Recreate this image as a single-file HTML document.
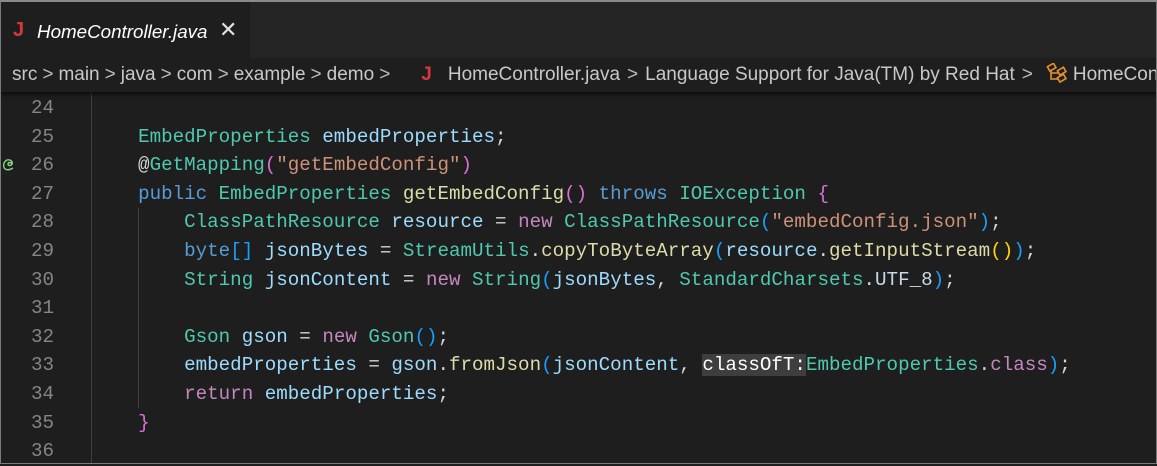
<!DOCTYPE html>
<html><head><meta charset="utf-8"><style>
*{margin:0;padding:0;box-sizing:border-box}
body{width:1157px;height:464px;background:#1e1e1e;overflow:hidden;position:relative;font-family:"Liberation Sans",sans-serif}
.frame{position:absolute;inset:0;border:1px solid #7a7a7a;border-top:2px solid #8a8a8a;pointer-events:none;z-index:5}
.tabbar{position:absolute;left:0;top:0;width:1157px;height:58px;background:#252526}
.tab{position:absolute;left:1px;top:2px;width:249px;height:56px;background:#1e1e1e;color:#fff}
.tab .j{position:absolute;left:12px;top:17px;color:#d9363e;font-weight:bold;font-size:20px}
.tab .name{position:absolute;left:36px;top:19px;font-style:italic;font-size:18.8px}
.tab .x{position:absolute;left:218px;top:15px;font-size:22px;color:#e0e0e0}
.crumb{position:absolute;left:0;top:58px;width:1157px;height:34px;background:#1e1e1e;box-shadow:0 3px 4px rgba(0,0,0,.55);color:#c8c8c8;font-size:19px;white-space:nowrap;line-height:34px;padding-left:12px;z-index:2;overflow:hidden}
.crumb .s{color:#bbb;margin:0 5px}
.crumb .s2b{color:#bbb;margin:0 7px}
.crumb .jj{color:#d9363e;font-weight:bold;margin:0 16px 0 26px}
.code{position:absolute;left:0;top:94px;font-family:"Liberation Mono",monospace;font-size:19.2px;color:#d4d4d4;white-space:pre}
.ln{position:absolute;left:0;width:54px;text-align:right;color:#858585}
.l{position:absolute;left:92px;height:29px;line-height:29px}
.row{position:absolute;left:0;width:1157px;height:29px;line-height:29px}
.guide{position:absolute;width:1px;background:#404040}
.t{color:#4ec9b0}.k{color:#569cd6}.p{color:#c586c0}.v{color:#9cdcfe}.f{color:#dcdcaa}.s2{color:#ce9178}
.m{color:#da70d6}.b{color:#179fff}.g{color:#ffd700}
.hl{background:#3e3e3e;color:#fff}
</style></head><body>
<div class="tabbar"><div class="tab"><span class="j">J</span><span class="name">HomeController.java</span><span class="x">✕</span></div></div>
<div class="crumb">src<span class="s">&gt;</span>main<span class="s">&gt;</span>java<span class="s">&gt;</span>com<span class="s">&gt;</span>example<span class="s">&gt;</span>demo<span class="s">&gt;</span><span class="jj">J</span>HomeController.java<span class="s2b">&gt;</span>Language Support for Java(TM) by Red Hat<span class="s2b">&gt;</span><svg width="22" height="20" viewBox="0 0 22 20" style="vertical-align:-3px;margin:0 5px 0 6px"><g fill="none" stroke="#e8912d" stroke-width="1.6"><rect x="2" y="2" width="7" height="5" transform="rotate(-30 5 4)"/><rect x="12" y="6" width="7" height="5" transform="rotate(-30 15 8)"/><rect x="12" y="13" width="7" height="5" transform="rotate(-30 15 15)"/><path d="M5 7v9h7M5 10h7"/></g></svg>HomeController</div>
<div class="guide" style="left:91px;top:93px;height:371px"></div>
<div class="guide" style="left:138px;top:208px;height:200px"></div>
<div class="code">
<div class="row" style="top:0"><span class="ln">24</span></div>
<div class="row" style="top:28.6px"><span class="ln">25</span><span class="l">    <span class="t">EmbedProperties</span> <span class="v">embedProperties</span>;</span></div>
<div class="row" style="top:57.2px"><svg style="position:absolute;left:2px;top:7px" width="14" height="14" viewBox="0 0 14 14"><path d="M3 11C1 9 1 4 5 2c4-1 6 2 5 4s-4 2-4 0 3-2 4 0M3 11c2 1 5 1 8-1" fill="none" stroke="#89d185" stroke-width="1.4"/></svg><span class="ln">26</span><span class="l">    @<span class="t">GetMapping</span><span class="m">(</span><span class="s2">"getEmbedConfig"</span><span class="m">)</span></span></div>
<div class="row" style="top:85.8px"><span class="ln">27</span><span class="l">    <span class="k">public</span> <span class="t">EmbedProperties</span> <span class="f">getEmbedConfig</span><span class="m">()</span> <span class="k">throws</span> <span class="t">IOException</span> <span class="m">{</span></span></div>
<div class="row" style="top:114.4px"><span class="ln">28</span><span class="l">        <span class="t">ClassPathResource</span> <span class="v">resource</span> = <span class="p">new</span> <span class="t">ClassPathResource</span><span class="b">(</span><span class="s2">"embedConfig.json"</span><span class="b">)</span>;</span></div>
<div class="row" style="top:143px"><span class="ln">29</span><span class="l">        <span class="k">byte</span><span class="b">[]</span> <span class="v">jsonBytes</span> = <span class="t">StreamUtils</span>.<span class="f">copyToByteArray</span><span class="b">(</span><span class="v">resource</span>.<span class="f">getInputStream</span><span class="g">()</span><span class="b">)</span>;</span></div>
<div class="row" style="top:171.6px"><span class="ln">30</span><span class="l">        <span class="t">String</span> <span class="v">jsonContent</span> = <span class="p">new</span> <span class="t">String</span><span class="b">(</span><span class="v">jsonBytes</span>, <span class="t">StandardCharsets</span>.<span class="v" style="color:#c8d8e8">UTF_8</span><span class="b">)</span>;</span></div>
<div class="row" style="top:200.2px"><span class="ln">31</span></div>
<div class="row" style="top:228.8px"><span class="ln">32</span><span class="l">        <span class="t">Gson</span> <span class="v">gson</span> = <span class="p">new</span> <span class="t">Gson</span><span class="b">()</span>;</span></div>
<div class="row" style="top:257.4px"><span class="ln">33</span><span class="l">        <span class="v">embedProperties</span> = <span class="v">gson</span>.<span class="f">fromJson</span><span class="b">(</span><span class="v">jsonContent</span>, <span class="hl">classOfT:</span><span class="t">EmbedProperties</span>.<span class="p">class</span><span class="b">)</span>;</span></div>
<div class="row" style="top:286px"><span class="ln">34</span><span class="l">        <span class="p">return</span> <span class="v">embedProperties</span>;</span></div>
<div class="row" style="top:314.6px"><span class="ln">35</span><span class="l">    <span class="m">}</span></span></div>
<div class="row" style="top:343.2px"><span class="ln">36</span></div>
</div>
<div class="frame"></div>
</body></html>
